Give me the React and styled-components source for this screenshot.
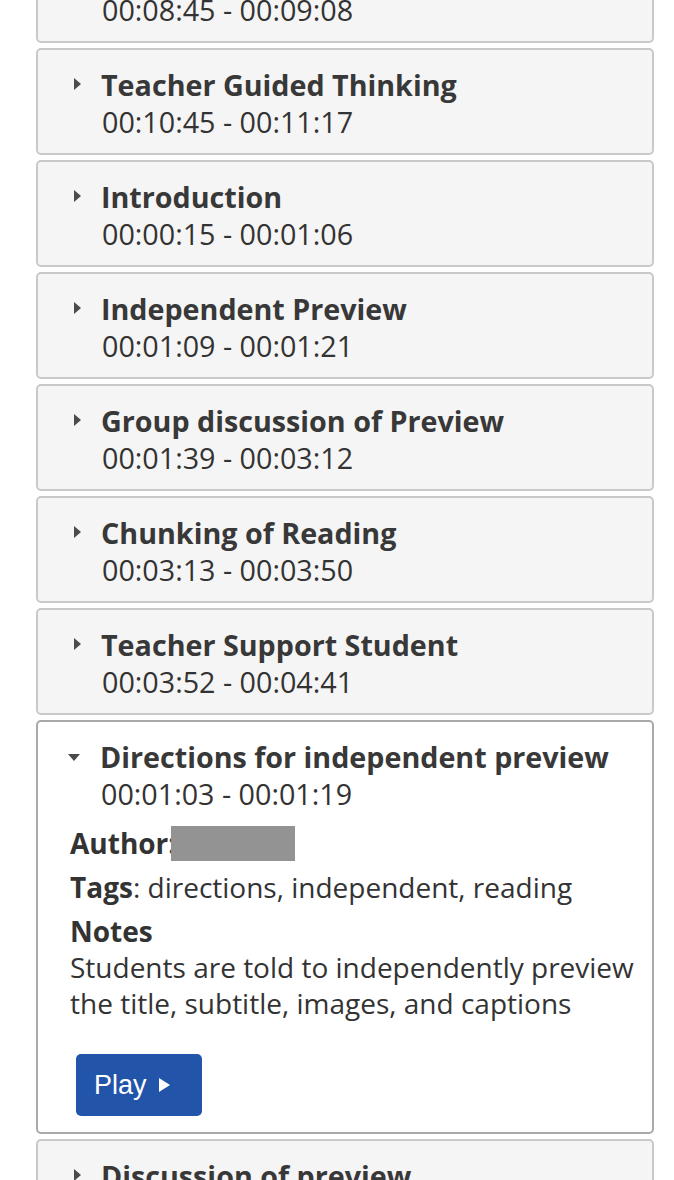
import React from 'react';
import styled, { createGlobalStyle } from 'styled-components';

const GlobalStyle = createGlobalStyle`
  html, body {
    margin: 0;
    padding: 0;
    background: #ffffff;
    overflow: hidden;
  }
  body {
    font-family: "Open Sans", "Noto Sans", sans-serif;
    color: #333333;
  }
`;

const segments = [
  { title: 'Teacher Modeling', time: '00:08:45 - 00:09:08' },
  { title: 'Teacher Guided Thinking', time: '00:10:45 - 00:11:17' },
  { title: 'Introduction', time: '00:00:15 - 00:01:06' },
  { title: 'Independent Preview', time: '00:01:09 - 00:01:21' },
  { title: 'Group discussion of Preview', time: '00:01:39 - 00:03:12' },
  { title: 'Chunking of Reading', time: '00:03:13 - 00:03:50' },
  { title: 'Teacher Support Student', time: '00:03:52 - 00:04:41' },
  {
    title: 'Directions for independent preview',
    time: '00:01:03 - 00:01:19',
    open: true,
    tags: 'directions, independent, reading',
    notes: 'Students are told to independently preview the title, subtitle, images, and captions',
  },
  { title: 'Discussion of preview', time: '00:04:42 - 00:05:30' },
];

function App() {
  return (
    <>
      <GlobalStyle />
      <List>
        {segments.map((s, i) => (
          <Segment key={i} $open={s.open}>
            <Header>
              <Caret $open={s.open} />
              <HeadText>
                <Title>{s.title}</Title>
                <Time>{s.time}</Time>
              </HeadText>
            </Header>
            {s.open && (
              <Body>
                <Field>
                  <b>Author:</b>
                  <Redacted />
                </Field>
                <Field>
                  <b>Tags</b>: {s.tags}
                </Field>
                <NotesLabel>Notes</NotesLabel>
                <Notes>{s.notes}</Notes>
                <PlayButton>
                  Play <PlayIcon />
                </PlayButton>
              </Body>
            )}
          </Segment>
        ))}
      </List>
    </>
  );
}
export default App;

const List = styled.div`
  display: flex;
  flex-direction: column;
  gap: 5px;
  width: 618px;
  margin: -64px 0 0 36px;
`;

const Segment = styled.div`
  box-sizing: border-box;
  border: 2px solid ${(p) => (p.$open ? '#a9a9a9' : '#c9c9c9')};
  border-radius: 5px;
  background: ${(p) => (p.$open ? '#ffffff' : '#f5f5f5')};
  padding: ${(p) => (p.$open ? '17px 0 16px' : '17px 0 13px')};
`;

const Header = styled.div`
  display: flex;
  align-items: flex-start;
  padding-left: 30px;
`;

const Caret = styled.span`
  width: 0;
  height: 0;
  margin-top: ${(p) => (p.$open ? '15px' : '11px')};
  margin-right: 20px;
  margin-left: ${(p) => (p.$open ? '0' : '6px')};
  ${(p) =>
    p.$open
      ? `border-left: 6.5px solid transparent;
         border-right: 6.5px solid transparent;
         border-top: 7px solid #4a4a4a;`
      : `border-top: 6.5px solid transparent;
         border-bottom: 6.5px solid transparent;
         border-left: 7px solid #4a4a4a;`}
`;

const HeadText = styled.div`
  display: flex;
  flex-direction: column;
`;

const Title = styled.div`
  font-size: 28.7px;
  font-weight: 700;
  line-height: 36px;
  color: #383838;
`;

const Time = styled.div`
  font-size: 28.7px;
  font-weight: 400;
  line-height: 37px;
  color: #333333;
  padding-left: 1px;
`;

const Body = styled.div`
  display: flex;
  flex-direction: column;
  align-items: flex-start;
  padding: 13px 8px 0 32px;
`;

const Field = styled.div`
  display: flex;
  align-items: center;
  font-size: 28px;
  line-height: 36px;
  margin-bottom: 8px;
  white-space: pre;
  b {
    font-weight: 700;
  }
`;

const Redacted = styled.span`
  display: inline-block;
  width: 124px;
  height: 35px;
  margin-left: -5px;
  background: #939393;
`;

const NotesLabel = styled.div`
  font-size: 28px;
  font-weight: 700;
  line-height: 36px;
`;

const Notes = styled.p`
  margin: 0;
  font-size: 28px;
  line-height: 36px;
`;

const PlayButton = styled.button`
  display: flex;
  align-items: center;
  gap: 12px;
  margin: 33px 0 0 6px;
  height: 62px;
  width: 126px;
  padding: 0 0 0 18px;
  border: none;
  border-radius: 5px;
  background: #2254aa;
  color: #ffffff;
  font-family: "Liberation Sans", Arial, sans-serif;
  font-size: 27px;
`;

const PlayIcon = styled.span`
  width: 0;
  height: 0;
  border-top: 7px solid transparent;
  border-bottom: 7px solid transparent;
  border-left: 11px solid #ffffff;
`;
